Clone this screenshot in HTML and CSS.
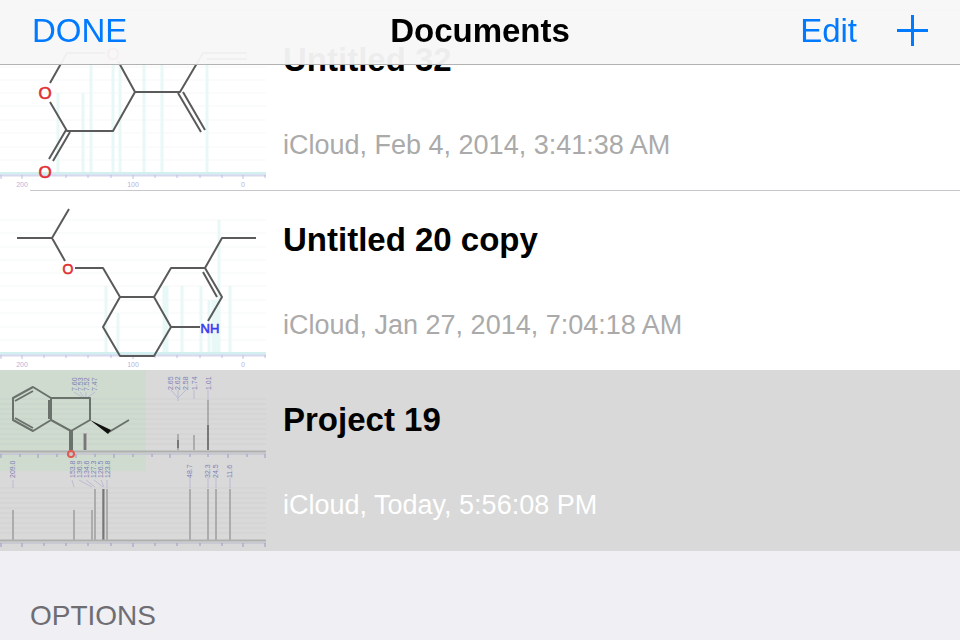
FILE: index.html
```html
<!DOCTYPE html>
<html lang="en">
<head>
    <meta charset="UTF-8">
    <meta name="viewport" content="width=device-width, initial-scale=1.0">
    <title>Documents</title>
    <link rel="stylesheet" href="styles.css">
</head>
<body>

    <header class="navBar">
        <button class="navBtn" type="button">DONE</button>
        <h1>Documents</h1>
        <div class="navActions">
            <button class="navBtn" type="button">Edit</button>
            <button class="navBtn addBtn" type="button" aria-label="Add document">
                <svg width="31" height="31" viewBox="0 0 31 31"><path d="M0 15.5H31M15.5 0V31" stroke="currentColor" stroke-width="3"/></svg>
            </button>
        </div>
    </header>

    <main>
        <ul class="docList">
            <li>
                <a class="docRow" href="#untitled-32">
                    <svg class="thumb" viewBox="0 0 266 181">
                        <!-- grid and spectrum -->
                        <path class="grid" d="M0 30H266M0 43H266M0 57H266M0 70H266M0 83H266M0 96H266M0 110H266M0 123H266M0 137H266M0 150H266"/>
                        <path class="peaks" d="M58 83V163M83 83V163M91 54V163M113 54V163M120 54V163M144 54V163M162 54V163M207 54V163"/>
                        <path class="base" d="M0 163.5H266"/>
                        <path class="axis" d="M0 165.5H266"/>
                        <path class="ticks" d="M1 165V169M22 165V169M44 165V168M66 165V168M88 165V168M111 165V168M133 165V169M155 165V168M177 165V168M200 165V168M222 165V168M243 165V169M265 165V168"/>
                        <g class="axisText"><text x="22" y="177">200</text><text x="133" y="177">100</text><text x="243" y="177">0</text></g>
                        <!-- molecule -->
                        <path class="bonds" d="M50 73L67 43H105M118 51L135 82L113 121H67L50 92M66 120L49 149M70 122L53 151M135 82H180L203 43H247M207 49H247M178 83L201 122M183 82L205 120"/>
                        <g class="oxygen"><text x="45" y="89">O</text><text x="113" y="50">O</text><text x="45" y="168">O</text></g>
                    </svg>
                    <span class="docInfo">
                        <span class="docTitle">Untitled 32</span>
                        <span class="docDate">iCloud, Feb 4, 2014, 3:41:38 AM</span>
                    </span>
                </a>
            </li>
            <li>
                <a class="docRow" href="#untitled-20-copy">
                    <svg class="thumb" viewBox="0 0 266 181">
                        <!-- grid and spectrum -->
                        <path class="grid" d="M0 30H266M0 43H266M0 57H266M0 70H266M0 83H266M0 96H266M0 110H266M0 123H266M0 137H266M0 150H266"/>
                        <path class="peaks" d="M106 96V163M118 123V163M164 96V163M167 96V163M182 96V163M201 96V163M209 110V163M213 110V163M216 110V163M219 30V163M230 96V163"/>
                        <path class="base" d="M0 163.5H266"/>
                        <path class="axis" d="M0 165.5H266"/>
                        <path class="ticks" d="M1 165V169M22 165V169M44 165V168M66 165V168M88 165V168M111 165V168M133 165V169M155 165V168M177 165V168M200 165V168M222 165V168M243 165V169M265 165V168"/>
                        <g class="axisText"><text x="22" y="177">200</text><text x="133" y="177">100</text><text x="243" y="177">0</text></g>
                        <!-- molecule -->
                        <path class="bonds" d="M69 19L52 48H17M52 48L65 71M75 78H103L120 107H154L171 78H205L222 48H256M120 107L103 137L120 166H154L171 137L154 107M171 137H200M208 131L222 107L205 78M203 82L217 107"/>
                        <g class="oxygen small"><text x="68" y="84">O</text></g>
                        <g class="nitrogen"><text x="210" y="143">NH</text></g>
                    </svg>
                    <span class="docInfo">
                        <span class="docTitle">Untitled 20 copy</span>
                        <span class="docDate">iCloud, Jan 27, 2014, 7:04:18 AM</span>
                    </span>
                </a>
            </li>
            <li>
                <a class="docRow selected" href="#project-19" aria-current="true">
                    <svg class="thumb" viewBox="0 0 266 181">
                        <rect class="highlight" width="146" height="101"/>
                        <path class="grid" d="M0 29H266M0 34H266M0 39H266M0 44H266M0 49H266M0 54H266M0 59H266M0 64H266M0 69H266M0 74H266M0 118H266M0 123H266M0 128H266M0 133H266M0 138H266M0 143H266M0 148H266M0 153H266M0 158H266M0 163H266"/>
                        <!-- proton spectrum -->
                        <path class="greyPeaks" d="M84 63V80M86 63V80M178 64V80M194 65V80M208 30V80"/>
                        <path class="darkPeaks" d="M85 64V80M208 55V80M178 70V78"/>
                        <path class="greyAxis" d="M0 81.5H266"/>
                        <path class="axis" d="M0 84H266"/>
                        <path class="ticks" d="M1 84V88M20 84V87M38 84V88M57 84V87M76 84V88M95 84V87M114 84V88M133 84V87M152 84V87M170 84V88M190 84V87M208 84V87M228 84V88M247 84V87M265 84V88"/>
                        <path class="leaders" d="M74 22L82 27M80 22L84 27M86 22V27M95 22L88 27M171 20L178 28L186 20M178 20V31M194 20V29M208 20V30"/>
                        <g class="peakText">
                            <text transform="translate(77 21) rotate(-90)">7.60</text>
                            <text transform="translate(83 21) rotate(-90)">7.53</text>
                            <text transform="translate(89 21) rotate(-90)">7.52</text>
                            <text transform="translate(97 21) rotate(-90)">7.47</text>
                            <text transform="translate(173 20) rotate(-90)">2.65</text>
                            <text transform="translate(180 20) rotate(-90)">2.62</text>
                            <text transform="translate(188 20) rotate(-90)">2.58</text>
                            <text transform="translate(197 20) rotate(-90)">1.74</text>
                            <text transform="translate(211 20) rotate(-90)">1.01</text>
                        </g>
                        <!-- carbon spectrum -->
                        <path class="greyPeaks" d="M13 140V170M74 140V170M92 140V170M95 119V170M103 119V170M107 119V170M190 119V170M208 119V170M216 119V170M230 119V170"/>
                        <path class="darkPeaks" d="M103.5 119V170"/>
                        <path class="greyAxis" d="M0 170.5H266"/>
                        <path class="axis" d="M0 173H266"/>
                        <path class="ticks" d="M1 173V177M22 173V177M44 173V176M66 173V176M88 173V176M111 173V176M133 173V177M155 173V176M177 173V176M200 173V176M222 173V176M243 173V177M265 173V177"/>
                        <path class="leaders" d="M13 110V118M72 110L74 117M79 110L92 117M86 110L95 117M94 110L103 117M101 110L104 117M107 110V118M190 108V118M208 108V118M216 108V118M230 108V118"/>
                        <g class="peakText">
                            <text transform="translate(15 108) rotate(-90)">209.0</text>
                            <text transform="translate(75 108) rotate(-90)">153.8</text>
                            <text transform="translate(82 108) rotate(-90)">136.9</text>
                            <text transform="translate(89 108) rotate(-90)">134.6</text>
                            <text transform="translate(96 108) rotate(-90)">127.3</text>
                            <text transform="translate(103 108) rotate(-90)">126.5</text>
                            <text transform="translate(110 108) rotate(-90)">123.8</text>
                            <text transform="translate(192 108) rotate(-90)">48.7</text>
                            <text transform="translate(210 108) rotate(-90)">32.3</text>
                            <text transform="translate(218 108) rotate(-90)">24.5</text>
                            <text transform="translate(232 108) rotate(-90)">11.6</text>
                        </g>
                        <!-- molecule -->
                        <path class="bonds" d="M33 17L13 28V50L33 61L51 50V28ZM33 21L15 31M15 48L33 58M49 30V49M51 28H90V50L71 61L51 50M70 61V80M72 61V80M109 62L129 50"/>
                        <path class="wedge" d="M90 50L108 64L111 60Z"/>
                        <circle class="ring" cx="71" cy="84" r="3"/>
                    </svg>
                    <span class="docInfo">
                        <span class="docTitle">Project 19</span>
                        <span class="docDate">iCloud, Today, 5:56:08 PM</span>
                    </span>
                </a>
            </li>
        </ul>

        <h2 class="sectionTitle">OPTIONS</h2>
    </main>

</body>
</html>
```

FILE: styles.css
```css
body {
    margin: 0;
    font-family: "Liberation Sans", Arial, sans-serif;
    background-color: #efeff4;
    color: #000;
}
.navBar {
    position: fixed;
    top: 0;
    left: 0;
    right: 0;
    z-index: 10;
    box-sizing: border-box;
    height: 65px;
    padding: 0 32px 3px;
    display: grid;
    grid-template-columns: 1fr auto 1fr;
    align-items: center;
    background: rgba(247, 247, 247, 0.96);
    border-bottom: 1px solid #b2b2b2;
}
.navBar h1 {
    margin: 0;
    font-size: 33px;
    line-height: 40px;
}
.navBtn {
    justify-self: start;
    padding: 0;
    border: none;
    background: none;
    font-family: inherit;
    font-size: 33px;
    line-height: 40px;
    color: #007aff;
    cursor: pointer;
}
.navActions {
    display: flex;
    align-items: center;
    justify-content: flex-end;
    gap: 40px;
}
.addBtn svg {
    display: block;
}
.docList {
    list-style: none;
    margin: 0;
    padding: 11px 0 0;
    background: #fff;
}
.docList li {
    margin-top: -1px;
}
.docRow {
    position: relative;
    display: flex;
    min-height: 181px;
    color: inherit;
    text-decoration: none;
}
/* separator, inset from the left edge */
.docRow::before {
    content: "";
    position: absolute;
    top: 0;
    left: 30px;
    right: 0;
    height: 1px;
    background: #c8c7cc;
}
.docRow.selected {
    background: #d9d9d9;
}
.docRow.selected::before {
    display: none;
}
.thumb {
    flex: none;
    width: 266px;
    height: 181px;
}
.docInfo {
    display: flex;
    flex-direction: column;
    gap: 49px;
    padding: 30px 17px 0;
}
.docTitle {
    font-size: 33px;
    font-weight: bold;
    line-height: 40px;
}
.docDate {
    font-size: 27px;
    line-height: 32px;
    color: #aaa;
}
.selected .docDate {
    color: #fff;
}
.sectionTitle {
    margin: 49px 30px 0;
    font-size: 28px;
    font-weight: normal;
    line-height: 32px;
    color: #6d6d72;
}

/* thumbnails */
.thumb path {
    fill: none;
}
.thumb text {
    text-anchor: middle;
}
.thumb .grid {
    stroke: #fafbfb;
    stroke-width: 2;
}
.thumb .peaks {
    stroke: #e8f8f7;
    stroke-width: 3;
}
.thumb .base {
    stroke: #d2f0f0;
    stroke-width: 3;
}
.thumb .axis {
    stroke: #d8d8ee;
    stroke-width: 2;
}
.thumb .ticks {
    stroke: #c0bce4;
    stroke-width: 1;
}
.thumb .bonds {
    stroke: #5a5a5a;
    stroke-width: 2;
    stroke-linejoin: round;
}
.axisText {
    font-size: 7px;
    fill: #b8b4dc;
}
.oxygen {
    font-size: 17px;
    fill: #e03030;
    stroke: #e03030;
    stroke-width: 0.6px;
}
.oxygen.small {
    font-size: 14px;
}
.nitrogen {
    font-size: 13px;
    fill: #3b3bf0;
    stroke: #3b3bf0;
    stroke-width: 0.6px;
}
.highlight {
    fill: #cedbce;
}
.selected .grid {
    stroke: #b4bac0;
    stroke-opacity: 0.2;
    stroke-width: 1;
}
.selected .axis {
    stroke: #c9c9d2;
    stroke-width: 2;
}
.selected .ticks {
    stroke: #9a98cc;
}
.selected .bonds {
    stroke: #6b716b;
    stroke-width: 2;
}
.greyPeaks {
    stroke: #acacac;
    stroke-width: 2;
}
.darkPeaks {
    stroke: #777;
    stroke-width: 2;
}
.greyAxis {
    stroke: #adb0ad;
    stroke-width: 2;
}
.leaders {
    stroke: #bbbbd3;
    stroke-width: 1;
}
.thumb .peakText text {
    font-size: 7px;
    fill: #8080b8;
    text-anchor: start;
}
.thumb .wedge {
    fill: #111;
}
.ring {
    fill: none;
    stroke: #e05850;
    stroke-width: 2;
}
```
